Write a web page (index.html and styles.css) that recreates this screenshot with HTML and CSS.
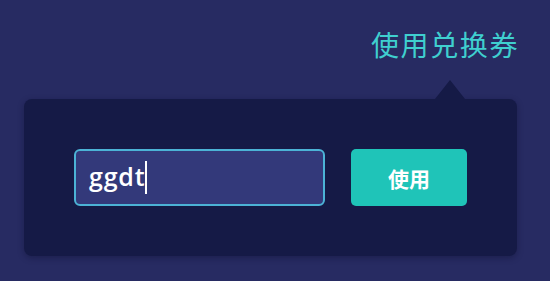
FILE: index.html
```html
<!DOCTYPE html>
<html>
<head>
<meta charset="utf-8">
<link rel="stylesheet" href="styles.css">
</head>
<body>
<div class="page">
  <div class="header">
    <span class="title">使用兑换券</span>
  </div>
  <div class="panel">
    <div class="arrow"></div>
    <div class="field">
      <span class="value">ggdt</span><span class="caret"></span>
    </div>
    <button class="btn">使用</button>
  </div>
</div>
</body>
</html>
```

FILE: styles.css
```css
html, body {
  margin: 0;
  padding: 0;
  background: #272b62;
  width: 550px;
  height: 281px;
  overflow: hidden;
}
.page {
  padding: 0 33px 0 24px;
  font-family: "Noto Sans CJK SC", "Noto Sans", sans-serif;
}
.header {
  display: flex;
  justify-content: flex-end;
  height: 80px;
  padding-top: 24px;
  box-sizing: border-box;
}
.title {
  color: #3fcfcf;
  font-size: 28px;
  line-height: 40px;
  letter-spacing: 1.6px;
  margin-right: -2px;
}
.panel {
  position: relative;
  margin-top: 19px;
  height: 157px;
  background: #151a46;
  border-radius: 8px;
  display: flex;
  align-items: center;
  padding: 0 0 0 50px;
  gap: 26px;
  box-shadow: 0 2px 6px rgba(10, 12, 40, 0.35);
}
.arrow {
  position: absolute;
  top: -19px;
  left: 411px;
  width: 0;
  height: 0;
  border-left: 15px solid transparent;
  border-right: 15px solid transparent;
  border-bottom: 19px solid #151a46;
}
.field {
  width: 234px;
  height: 53px;
  border: 2px solid #4cb3d6;
  border-radius: 6px;
  background: #33397a;
  display: flex;
  align-items: center;
  padding-left: 13px;
  box-sizing: content-box;
  margin-top: -1px;
}
.value {
  font-family: "Open Sans", "DejaVu Sans", sans-serif;
  font-weight: 600;
  font-size: 25px;
  color: #ffffff;
  letter-spacing: 0.8px;
  line-height: 30px;
  margin-top: -2px;
}
.caret {
  width: 2px;
  height: 33px;
  background: #ffffff;
  margin-left: 0px;
}
.btn {
  width: 116px;
  height: 57px;
  border: none;
  border-radius: 5px;
  background: #1fc4b8;
  color: #ffffff;
  font-family: "Noto Sans CJK SC", sans-serif;
  font-size: 21px;
  font-weight: 700;
  padding: 0;
  margin-top: 0px;
}
```
